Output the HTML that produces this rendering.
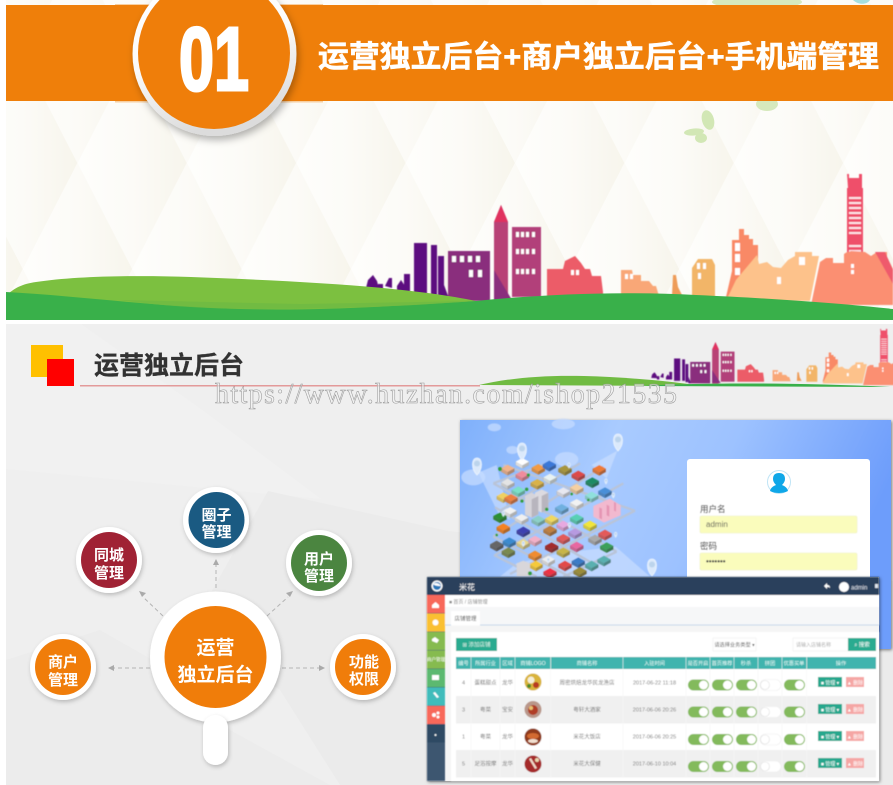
<!DOCTYPE html>
<html><head><meta charset="utf-8">
<style>
html,body{margin:0;padding:0;background:#fff;width:893px;height:785px;overflow:hidden}
svg{display:block}
text{font-family:"Liberation Sans","Noto Sans CJK SC",sans-serif}
</style></head><body>
<svg width="893" height="785" viewBox="0 0 893 785" xmlns="http://www.w3.org/2000/svg">
<defs>
<linearGradient id="bl" x1="0" y1="0" x2="1" y2="0.25"><stop offset="0" stop-color="#7fb0fb"/><stop offset=".35" stop-color="#a9cbff"/><stop offset=".62" stop-color="#9dc2ff"/><stop offset="1" stop-color="#6d9dfb"/></linearGradient>
<linearGradient id="dg" x1="0" y1="0" x2="1" y2="0"><stop offset="0" stop-color="#fefefc"/><stop offset=".5" stop-color="#fcfbf7"/><stop offset="1" stop-color="#f7f5ec"/></linearGradient>
<linearGradient id="ring" x1="0" y1="0" x2=".3" y2="1"><stop offset="0" stop-color="#fff"/><stop offset=".55" stop-color="#fbfbfb"/><stop offset="1" stop-color="#dcdcdc"/></linearGradient>
<filter id="b3" x="-5%" y="-5%" width="110%" height="110%"><feGaussianBlur stdDeviation=".45"/></filter>
<filter id="b6" x="-5%" y="-5%" width="110%" height="110%"><feGaussianBlur stdDeviation=".55"/></filter>
<filter id="b2" x="-5%" y="-5%" width="110%" height="110%"><feGaussianBlur stdDeviation=".3"/></filter>
<filter id="sh" x="-20%" y="-20%" width="140%" height="140%"><feDropShadow dx="1" dy="2" stdDeviation="2" flood-color="#000" flood-opacity=".22"/></filter>
<filter id="shb" x="-20%" y="-20%" width="140%" height="140%"><feDropShadow dx="2" dy="4" stdDeviation="4" flood-color="#000" flood-opacity=".3"/></filter>
<filter id="sh2" x="-5%" y="-5%" width="110%" height="110%"><feDropShadow dx="1" dy="1" stdDeviation="1.5" flood-color="#000" flood-opacity=".5"/></filter>
<pattern id="dia" width="109.4" height="212" patternUnits="userSpaceOnUse" x="-32" y="57">
<rect width="109.4" height="212" fill="#fbfaf5"/>
<path id="dd" d="M54.7 0L109.400 106L54.7 212L0 106Z" fill="url(#dg)"/>
<path d="M0 -106L54.7 0L0 106L-54.7 0Z" fill="url(#dg)"/>
<path d="M109.400 -106L164.100 0L109.400 106L54.7 0Z" fill="url(#dg)"/>
<path d="M0 106L54.7 212L0 318L-54.7 212Z" fill="url(#dg)"/>
<path d="M109.400 106L164.100 212L109.400 318L54.7 212Z" fill="url(#dg)"/>
</pattern>
<g id="sky">
<path d="M366 288l2-8 5-5 4 6 2 8zM378 284h5v8h-5zM385 286l4-8h3v10zM397 286l4-6 4 6v6h-8zM404 274h6v18h-6z" fill="#5d1080"/>
<rect x="414" y="243" width="13" height="52" fill="#5d1080"/><rect x="431" y="245" width="6" height="50" fill="#5d1080"/><rect x="438" y="256" width="6" height="42" fill="#5d1080"/>
<path d="M444 285l6 16h-6z" fill="#5d1080"/>
<rect x="448" y="251" width="42" height="50" fill="#8a2d7d"/>
<g fill="#fff"><rect x="452" y="256" width="4" height="6"/><rect x="460" y="256" width="4" height="6"/><rect x="468" y="256" width="4" height="6"/><rect x="476" y="256" width="4" height="6"/><rect x="469" y="270" width="4" height="7"/><rect x="478" y="270" width="4" height="7"/></g>
<path d="M494 222l7-17 7 17v80h-14z" fill="#b84276"/><path d="M494 222l7-17 7 17z" fill="#e0305f"/>
<path d="M494 270l18 30h-18z" fill="#8a2d7d"/>
<rect x="512" y="227" width="29" height="70" fill="#b2407a"/>
<g fill="#fff"><rect x="516" y="232" width="3" height="5"/><rect x="521" y="232" width="3" height="5"/><rect x="526" y="232" width="3" height="5"/><rect x="532" y="232" width="3" height="5"/><rect x="516" y="249" width="3" height="5"/><rect x="521" y="249" width="3" height="5"/><rect x="526" y="249" width="3" height="5"/><rect x="532" y="249" width="3" height="5"/><rect x="516" y="269" width="3" height="5"/><rect x="521" y="269" width="3" height="5"/><rect x="526" y="269" width="3" height="5"/><rect x="532" y="269" width="3" height="5"/></g>
<path d="M547 269h16l2-8 10-5 6 7 4 6h5l2 7h9l2 16v5h-56z" fill="#ec5b67"/>
<g fill="#fff"><rect x="571" y="270" width="3" height="5"/><rect x="576" y="270" width="3" height="5"/></g>
<path d="M621 270h11l1 5h8v6h8l4 5h3l3 10h-38z" fill="#f9a777"/>
<g fill="#fff"><rect x="625" y="274" width="3" height="5"/><rect x="630" y="274" width="3" height="5"/></g>
<path d="M673 275h3l2 12 4 8h-10z" fill="#ee9c59"/>
<path d="M692 268l6-9h14l3 6v32h-23z" fill="#f2b568"/>
<g fill="#fff"><rect x="697" y="263" width="3" height="6"/><rect x="703" y="263" width="3" height="6"/><rect x="698" y="273" width="3" height="6"/></g>
<path d="M732 240h7v-11h5v6h5v4h4v6h5v18l-14 22l-6 12h-12l6-26z" fill="#f98966"/>
<g fill="#fff"><rect x="735" y="243" width="5" height="8"/><rect x="735" y="254" width="5" height="8"/><rect x="735" y="268" width="5" height="7"/></g>
<path d="M736 280l21-25 2 9 8-2 6 5 8 1 7-8 7-4v-4h17v4h7l-9 45h-84z" fill="#fdc28b"/>
<g fill="#fff"><rect x="799" y="257" width="6" height="8"/><rect x="777" y="277" width="4" height="7"/></g>
<path d="M847 174h2v4h10v-4h3v14h1v68h-16v-68h1z" fill="#ef4f6b"/>
<g fill="#fff" opacity=".85"><rect x="849" y="197" width="12" height="2"/><rect x="849" y="202" width="12" height="2"/><rect x="849" y="207" width="12" height="2"/><rect x="849" y="212" width="12" height="2"/><rect x="849" y="217" width="12" height="2"/><rect x="849" y="222" width="12" height="2"/><rect x="849" y="227" width="12" height="2"/><rect x="849" y="232" width="12" height="2"/><rect x="849" y="245" width="12" height="2"/><rect x="849" y="250" width="12" height="2"/></g>
<path d="M811 305l9-43 6-4h7v5h11v-9l3-2h2l2-1 14 1 6 4 6-4h10v5l6 12v36z" fill="#fb8f72"/>
<path d="M875 252h10l8 18v14z" fill="#ef5a6c"/>
<g fill="#fff"><rect x="851" y="264" width="3" height="4"/><rect x="851" y="270" width="3" height="4"/></g>
</g>
<g id="tog"><rect width="21" height="11" rx="5.500" fill="#83ba5c"/><circle cx="15.500" cy="5.500" r="4.500" fill="#fff"/></g>
<g id="tof"><rect width="21" height="11" rx="5.500" fill="#fff" stroke="#eee" stroke-width=".6"/><circle cx="5" cy="5.500" r="4.500" fill="#fff" stroke="#ddd" stroke-width=".6"/></g>
<g id="pin"><path d="M0 10C-6 4-6-7 0-7S6 4 0 10Z" fill="#dbe9fb" stroke="#eef6ff" stroke-width=".8"/><circle cy="-1.500" r="3" fill="#bcd4ec"/></g>
<g id="i"><path d="M-20 0L0 11V21L-20 10Z" fill="#555"/><path d="M20 0L0 11V21L20 10Z" fill="#333"/><path d="M-20 0L0 11V21L-20 10Z" fill="currentColor" opacity=".8"/><path d="M20 0L0 11V21L20 10Z" fill="currentColor" opacity=".65"/><path d="M-20 0L0-11L20 0L0 11Z" fill="currentColor"/></g>
<g id="act"><rect x="0" y="0" width="24" height="10" fill="#25a78d"/><text x="12" y="7.400" font-size="5" fill="#fff" text-anchor="middle">■ 管理 ▾</text><rect x="28" y="0" width="18" height="10" fill="#f5a6a4"/><text x="37" y="7.400" font-size="5" fill="#fff" text-anchor="middle">▲ 删除</text></g>
</defs>

<rect width="893" height="785" fill="#fff"/>

<!-- TOP SECTION -->
<rect x="6" y="0" width="887" height="320" fill="url(#dia)"/>
<ellipse cx="757" cy="2" rx="45" ry="7" fill="#d6e9bd"/>
<path d="M853 0h17c-3 5-12 5-17 0z" fill="#a5dfe0"/>
<ellipse cx="767" cy="104" rx="11" ry="7" fill="#d6e9bd"/>
<g fill="#d2e7b5"><ellipse cx="708" cy="120" rx="6" ry="10" transform="rotate(-15 708 120)"/><ellipse cx="694" cy="132" rx="10" ry="3.500" transform="rotate(-5 694 132)"/><ellipse cx="701" cy="138" rx="6" ry="5"/></g>
<g filter="url(#b3)"><use href="#sky"/></g>
<path d="M6 296c8-8 16-12 30-14 40-6 100-7 155-5 110 4 220 10 285 24v19H6z" fill="#7cc040"/>
<path d="M6 292c60 3 130 12 190 15 80 5 160 2 280-6 70-7 145-10 220-6 90 4 150 9 197 14v11H6z" fill="#39b04a"/>
<path d="M120 300c40 6 90 9 140 9 80 0 150-3 216-8L300 304z" fill="#6dba43" opacity=".75"/>
<!-- band -->
<rect x="115" y="4" width="208" height="98.500" fill="#f8cfa0"/>
<rect x="6" y="5" width="887" height="96" fill="#ef7f0a"/>
<circle cx="214.500" cy="54" r="82" fill="url(#ring)" filter="url(#shb)"/>
<circle cx="214" cy="53" r="76" fill="#ef7e0a"/>
<text x="179" y="90" font-size="90" font-weight="700" fill="#fff" textLength="70" lengthAdjust="spacingAndGlyphs" stroke="#fff" stroke-width="3">01</text>
<g filter="url(#b2)"><text x="318" y="67" font-size="30" font-weight="700" fill="#fff" textLength="561" lengthAdjust="spacingAndGlyphs" stroke="#fff" stroke-width=".5">运营独立后台+商户独立后台+手机端管理</text></g>

<!-- SECOND SECTION -->
<rect x="6" y="324" width="887" height="461" fill="#efefef"/>
<path d="M6 324h75l120 85 120 90-315-30z" fill="#f1f1f1"/>
<path d="M268 491l180 40 445 50v204H340l-60-95-90-60z" fill="#ebebeb"/>
<path d="M6 660l94-30 70 40 60 60 100 55H6z" fill="#ececec"/>
<rect x="31" y="345" width="32" height="32" fill="#ffc000"/>
<rect x="47" y="359" width="27" height="27" fill="#ff0000"/>
<g filter="url(#b2)"><text x="94" y="374" font-size="25" font-weight="700" fill="#333" textLength="150" lengthAdjust="spacingAndGlyphs" stroke="#333" stroke-width=".3">运营独立后台</text></g>
<rect x="80" y="385" width="400" height="1.500" fill="#e39a9a"/>
<!-- mini skyline -->
<g filter="url(#b3)"><g transform="translate(477 254) scale(.476 .43)"><use href="#sky"/></g></g>
<path d="M479 385c30-7 65-10 105-9 40 1 85 5 119 10z" fill="#70bb42"/>
<path d="M640 386c50-3 150-4 250 1z" fill="#39b04a"/>
<rect x="479" y="387" width="414" height="36" fill="#efefef"/>

<!-- arrows -->
<g stroke="#b4b4b4" stroke-width="1" stroke-dasharray="4 3" fill="none">
<path d="M216 588V563"/><path d="M163 616L143 597"/><path d="M267 616L288 597"/><path d="M150 668H113"/><path d="M282 668H320"/>
</g>
<g fill="#aaa"><path d="M216 559l-3 6h6z"/><path d="M139 591l7 2-4 4z"/><path d="M293 591l-7 2 4 4z"/><path d="M108 668l6-3v6z"/><path d="M325 668l-6-3v6z"/></g>

<!-- circles -->
<g filter="url(#sh)"><circle cx="216" cy="520" r="33" fill="#fff"/><circle cx="109" cy="560" r="33" fill="#fff"/><circle cx="319" cy="563" r="33" fill="#fff"/><circle cx="63" cy="667" r="33" fill="#fff"/><circle cx="363" cy="667" r="33" fill="#fff"/><circle cx="215.500" cy="657" r="65.500" fill="#fff"/></g>
<circle cx="216.500" cy="520" r="28" fill="#1a5a82"/>
<circle cx="109" cy="560" r="28" fill="#a02234"/>
<circle cx="319" cy="563" r="28" fill="#4b8540"/>
<circle cx="63" cy="667" r="28" fill="#f07d0a"/>
<circle cx="363" cy="667" r="28" fill="#f07d0a"/>
<circle cx="215.500" cy="657" r="51" fill="#f07d0a"/>
<rect x="203" y="715" width="25" height="50" rx="12.500" fill="#fff" filter="url(#sh)"/>
<g filter="url(#b2)" font-size="15" font-weight="700" fill="#fff" text-anchor="middle">
<text x="216.500" y="520">圈子</text><text x="216.500" y="537">管理</text>
<text x="109" y="560">同城</text><text x="109" y="578">管理</text>
<text x="319" y="564">用户</text><text x="319" y="581">管理</text>
<text x="63" y="667">商户</text><text x="63" y="685">管理</text>
<text x="364" y="667">功能</text><text x="364" y="684">权限</text>
<text x="215.500" y="654" font-size="19">运营</text><text x="215.500" y="681" font-size="19">独立后台</text>
</g>

<!-- LOGIN PANEL -->
<g filter="url(#sh2)"><rect x="460" y="420" width="431" height="229" fill="url(#bl)"/></g>
<g filter="url(#b6)">
<g transform="translate(460 420) scale(.33333)">
<g fill="#cfe2ff" opacity=".6"><path d="M55 158L110 135 150 300 115 280z"/><path d="M472 92L395 135 440 175z"/><path d="M467 380L570 470H120L170 430 300 400z"/></g>
<g fill="#c4dbff" opacity=".75"><ellipse cx="103" cy="22" rx="20" ry="12"/><ellipse cx="310" cy="12" rx="35" ry="16"/><ellipse cx="157" cy="90" rx="18" ry="12"/><ellipse cx="40" cy="172" rx="36" ry="24"/><ellipse cx="320" cy="118" rx="35" ry="22"/></g>
<g stroke="#b9c4d8" stroke-width="7" fill="none">
<path d="M130 135L525 272M100 190L470 395M105 262L415 440M100 350L330 470M102 405L230 470"/>
<path d="M100 190L275 125M120 272L360 130M100 350L430 140M105 405L490 190M150 462L525 272M310 470L470 395"/>
</g>
<use href="#i" x="143" y="145" color="#f2b48c"/><use href="#i" x="187" y="125" color="#fff"/><use href="#i" x="235" y="143" color="#f29b45"/><use href="#i" x="268" y="133" color="#3b78d8"/><use href="#i" x="315" y="146" color="#a7953e"/><use href="#i" x="355" y="163" color="#dd4a48"/><use href="#i" x="418" y="146" color="#ee7a35"/><use href="#i" x="397" y="183" color="#1e8b63"/><use href="#i" x="143" y="187" color="#e4e4e4"/><use href="#i" x="187" y="163" color="#f08c9c"/><use href="#i" x="232" y="188" color="#d9b24a"/><use href="#i" x="270" y="172" color="#e8f2f2"/><use href="#i" x="350" y="203" color="#f5d0a2"/><use href="#i" x="310" y="213" color="#e8e8f0"/><use href="#i" x="175" y="210" color="#7de0c7"/><use href="#i" x="130" y="228" color="#f0d060"/><use href="#i" x="153" y="233" color="#ee8040"/><use href="#i" x="435" y="213" color="#4a8fd8"/><use href="#i" x="395" y="226" color="#8fe0dc"/><use href="#i" x="305" y="263" color="#6fb0e0"/><use href="#i" x="350" y="248" color="#f2f2f2"/><use href="#i" x="120" y="288" color="#2c9030"/><use href="#i" x="150" y="272" color="#f2f2f2"/><use href="#i" x="185" y="293" color="#f0f0f0"/><use href="#i" x="130" y="321" color="#f58220"/><use href="#i" x="190" y="331" color="#3c3fb0"/><use href="#i" x="235" y="298" color="#8cd0c8"/><use href="#i" x="275" y="296" color="#f0d860"/><use href="#i" x="310" y="313" color="#e8a9e0"/><use href="#i" x="350" y="293" color="#59d0b5"/><use href="#i" x="390" y="313" color="#f1e53a"/><use href="#i" x="270" y="328" color="#c08040"/><use href="#i" x="345" y="336" color="#b79ae0"/><use href="#i" x="310" y="353" color="#e35a5a"/><use href="#i" x="148" y="363" color="#3a8bd0"/><use href="#i" x="110" y="373" color="#666"/><use href="#i" x="190" y="368" color="#e8d890"/><use href="#i" x="275" y="378" color="#a32b2b"/><use href="#i" x="225" y="358" color="#f2b0c8"/><use href="#i" x="350" y="376" color="#e868a0"/><use href="#i" x="405" y="355" color="#aaa"/><use href="#i" x="435" y="340" color="#e35a5a"/><use href="#i" x="440" y="378" color="#3aa05a"/><use href="#i" x="145" y="393" color="#7a8a50"/><use href="#i" x="225" y="403" color="#f08c30"/><use href="#i" x="310" y="393" color="#c7b54a"/><use href="#i" x="265" y="418" color="#eee"/><use href="#i" x="355" y="423" color="#3a7bc8"/><use href="#i" x="395" y="433" color="#5ab0b0"/><use href="#i" x="432" y="418" color="#5ab0b0"/><use href="#i" x="228" y="433" color="#f5c93a"/><use href="#i" x="315" y="433" color="#e24a4a"/><use href="#i" x="270" y="455" color="#e34"/><use href="#i" x="360" y="452" color="#9a8c3a"/>
<g fill="#d6d4da"><path d="M195 228l20-10 20 10v55l-20 10-20-10z"/><path d="M225 218l20-10 20 10v50l-20 10-20-10z" fill="#dcdae0"/><path d="M170 430l20-8 20 8v40h-40z" fill="#d8d6da"/></g>
<g fill="#b8b5be"><path d="M215 238v55l20-10v-55z"/><path d="M245 228v50l20-10v-50z"/></g>
<path d="M400 258l50-22 32 20v30l-50 22-32-18z" fill="#f2b9cf"/><path d="M418 262v32l8 4v-32zM440 254v32l8 4v-32zM462 246v26l6 3v-26z" fill="#e595b3"/>
<g fill="#2e9e3a"><circle cx="120" cy="147" r="6"/><circle cx="205" cy="165" r="5"/><circle cx="200" cy="208" r="5"/><circle cx="186" cy="243" r="5"/><circle cx="260" cy="268" r="5"/><circle cx="385" cy="240" r="4"/><circle cx="210" cy="460" r="6"/><circle cx="335" cy="222" r="4"/><circle cx="110" cy="345" r="4"/></g>
<use href="#pin" x="50" y="128" style="transform-box:fill-box"/><use href="#pin" x="185" y="90"/><use href="#pin" x="473" y="58"/><use href="#pin" x="327" y="135"/><use href="#pin" x="438" y="183"/><use href="#pin" x="460" y="225"/><use href="#pin" x="467" y="343"/><use href="#pin" x="130" y="280"/><use href="#pin" x="265" y="420"/><use href="#pin" x="190" y="370"/><use href="#pin" x="328" y="315"/>
</g>
<use href="#pin" x="652" y="566"/><use href="#pin" x="477" y="465"/><use href="#pin" x="522" y="450"/><use href="#pin" x="618" y="441"/>
</g>
<rect x="687" y="459" width="183" height="130" rx="3" fill="#fff"/>
<circle cx="779" cy="482" r="11.500" fill="#fff" stroke="#bfe4f6" stroke-width="1"/>
<path d="M770 491c1-4 4-5 6-6-2-2-3-4-3-6 0-4 2-6 6-6s6 2 6 6c0 2-1 4-3 6 2 1 5 2 6 6-3 1.500-6 2-9 2s-6-.5-9-2z" fill="#0fa7e8"/>
<g filter="url(#b3)"><text x="700" y="512" font-size="8.500" fill="#555">用户名</text>
<rect x="700" y="516" width="157" height="17" rx="1.500" fill="#fafcbc" stroke="#eef0c8" stroke-width=".6"/><text x="706" y="527" font-size="8" fill="#555">admin</text>
<text x="700" y="549" font-size="8.500" fill="#555">密码</text>
<rect x="700" y="553" width="157" height="17" rx="1.500" fill="#fafcbc" stroke="#eef0c8" stroke-width=".6"/><text x="706" y="564" font-size="8" font-weight="700" fill="#444">•••••••</text></g>

<!-- ADMIN PANEL -->
<g filter="url(#sh2)"><rect x="427" y="577" width="452" height="204" fill="#f5f5f5"/></g>
<g filter="url(#b6)">
<rect x="427" y="577" width="452" height="18" fill="#2a3f5c"/>
<circle cx="437" cy="586" r="5.500" fill="#fff"/><circle cx="437" cy="586" r="4" fill="#2a77b8"/><path d="M433 584c3-2 6-1 8 2-3 0-6 0-8-2z" fill="#fff"/>
<text x="459" y="590" font-size="8" fill="#fff">米花</text>
<path d="M824 586l3-3v2c2 0 3 1 3 3-1-1-2-1-3-1v2z" fill="#fff"/>
<circle cx="844" cy="587" r="5" fill="#fff"/><text x="851" y="589.500" font-size="6" fill="#dfe5ee">admin</text>
<rect x="875" y="584" width="3" height="4" fill="#dfe5ee"/>
<rect x="427" y="595" width="18" height="186" fill="#3d566f"/>
<rect x="427" y="595" width="18" height="18" fill="#f8685a"/>
<rect x="427" y="613.500" width="18" height="18" fill="#fac030"/>
<rect x="427" y="632" width="18" height="18" fill="#86bb50"/>
<rect x="427" y="650.500" width="18" height="18" fill="#86bb50"/>
<rect x="427" y="669" width="18" height="18" fill="#5cb96f"/>
<rect x="427" y="687.500" width="18" height="18" fill="#41bcbb"/>
<rect x="427" y="706" width="18" height="18" fill="#f8685a"/>
<rect x="427" y="724.500" width="18" height="18" fill="#2d4963"/>
<g fill="#fff"><path d="M432 605l3.500-3 3.500 3v3h-7z"/><circle cx="435.500" cy="622.500" r="3"/><path d="M432 639l3-2 4 3-2 3-5-2z"/><rect x="432" y="675" width="7" height="5"/><path d="M433 693l2-1 4 5-2 1z"/><circle cx="434" cy="715" r="2"/><circle cx="438" cy="713" r="1.500"/><circle cx="438" cy="717" r="1.500"/><circle cx="435.500" cy="735" r="1"/></g>
<text x="436" y="661" font-size="4.500" fill="#fff" text-anchor="middle">商户管理</text>
<rect x="445" y="595" width="434" height="12" fill="#fff"/>
<text x="449" y="603.500" font-size="5" fill="#888">■ 首页  /  店铺管理</text>
<rect x="445" y="607" width="434" height="18" fill="#f6f7f8"/>
<rect x="445" y="624.500" width="434" height="1" fill="#c8d8ea"/>
<rect x="451" y="611" width="29" height="14.500" fill="#fff"/>
<text x="465.500" y="620.500" font-size="5.500" fill="#555" text-anchor="middle">店铺管理</text>
<rect x="451" y="632" width="428" height="149" fill="#fff"/>
<rect x="456" y="638" width="41" height="13" fill="#2bab90"/>
<text x="476.500" y="646.500" font-size="5.500" fill="#d8f3ea" text-anchor="middle">⊞  添加店铺</text>
<rect x="713" y="638" width="43" height="13" fill="#fff" stroke="#eee" stroke-width=".6"/>
<text x="734.500" y="646.500" font-size="5.200" fill="#555" text-anchor="middle">请选择业务类型 ▾</text>
<rect x="793" y="638" width="55" height="13" fill="#fff" stroke="#eee" stroke-width=".6"/>
<text x="796" y="646.500" font-size="5" fill="#aaa">请输入店铺名称</text>
<rect x="848" y="638" width="28" height="13" fill="#2bab90"/>
<text x="862" y="646.500" font-size="5.500" fill="#fff" text-anchor="middle">⌕ 搜索</text>
<rect x="456" y="657" width="420" height="12" fill="#3fb4ae"/>
<rect x="456" y="696" width="420" height="27.500" fill="#f0f0f0"/>
<rect x="456" y="750" width="420" height="27.500" fill="#f0f0f0"/>
<g stroke="#f7f7f7" stroke-width=".6"><path d="M471 657v121M500 657v121M515 657v121M550.700 657v121M623 657v121M686 657v121M710 657v121M734 657v121M758 657v121M782 657v121M806.700 657v121"/></g>
<g font-size="5.200" fill="#e8fbf8" text-anchor="middle">
<text x="463.500" y="665">编号</text><text x="485.500" y="665">所属行业</text><text x="507.500" y="665">区域</text><text x="533" y="665">商铺LOGO</text><text x="587" y="665">商铺名称</text><text x="654.500" y="665">入驻时间</text><text x="698" y="665">是否开启</text><text x="722" y="665">首页推荐</text><text x="746" y="665">秒杀</text><text x="770" y="665">拼团</text><text x="794" y="665">优惠买单</text><text x="841" y="665">操作</text>
</g>
<g font-size="5.500" fill="#777" text-anchor="middle">
<text x="463.500" y="684.500">4</text><text x="485.500" y="684.500">蛋糕甜点</text><text x="507.500" y="684.500">龙华</text><text x="587" y="684.500">周密烘焙龙华民龙渔店</text><text x="654.500" y="684.500">2017-06-22 11:18</text>
<text x="463.500" y="711.500">3</text><text x="485.500" y="711.500">粤菜</text><text x="507.500" y="711.500">宝安</text><text x="587" y="711.500">粤轩大酒家</text><text x="654.500" y="711.500">2017-06-06 20:26</text>
<text x="463.500" y="738.500">1</text><text x="485.500" y="738.500">粤菜</text><text x="507.500" y="738.500">龙华</text><text x="587" y="738.500">米花大饭店</text><text x="654.500" y="738.500">2017-06-06 20:25</text>
<text x="463.500" y="765.500">5</text><text x="485.500" y="765.500">足浴按摩</text><text x="507.500" y="765.500">龙华</text><text x="587" y="765.500">米花大保健</text><text x="654.500" y="765.500">2017-06-10 10:04</text>
</g>
<circle cx="533" cy="682" r="8.500" fill="#d9b43a"/><circle cx="531" cy="680" r="3.500" fill="#f5efd8"/><circle cx="536" cy="685" r="3" fill="#b83a20"/><circle cx="529" cy="686" r="2" fill="#4e8a2e"/>
<circle cx="533" cy="709.500" r="8.500" fill="#b9978a"/><circle cx="533" cy="710" r="5" fill="#b03c28"/><circle cx="531" cy="708" r="2" fill="#e8c070"/>
<circle cx="533" cy="737" r="8.500" fill="#8f3a1a"/><ellipse cx="533" cy="736" rx="6" ry="3" fill="#d26a30"/><ellipse cx="533" cy="741" rx="5" ry="2" fill="#f2e0d0"/>
<circle cx="533" cy="764" r="8.500" fill="#a52c2c"/><path d="M529 759l6 10 2-1-6-10z" fill="#f0d8c8"/><circle cx="537" cy="760" r="2" fill="#e8d8b0"/>
<g>
<use href="#tog" x="688" y="679.500"/><use href="#tog" x="712" y="679.500"/><use href="#tog" x="736" y="679.500"/><use href="#tof" x="760" y="679.500"/><use href="#tog" x="784" y="679.500"/>
<use href="#tog" x="688" y="706.500"/><use href="#tog" x="712" y="706.500"/><use href="#tog" x="736" y="706.500"/><use href="#tof" x="760" y="706.500"/><use href="#tog" x="784" y="706.500"/>
<use href="#tog" x="688" y="734"/><use href="#tog" x="712" y="734"/><use href="#tog" x="736" y="734"/><use href="#tof" x="760" y="734"/><use href="#tog" x="784" y="734"/>
<use href="#tog" x="688" y="761"/><use href="#tog" x="712" y="761"/><use href="#tog" x="736" y="761"/><use href="#tof" x="760" y="761"/><use href="#tog" x="784" y="761"/>
<use href="#act" x="818" y="677"/><use href="#act" x="818" y="704"/><use href="#act" x="818" y="731"/><use href="#act" x="818" y="758"/>
</g>
</g>

<!-- watermark -->
<text x="215" y="403" font-size="28" fill="#f4f4f4" fill-opacity=".6" stroke="#999" stroke-width=".55" textLength="462" lengthAdjust="spacing" style="font-family:'Liberation Serif',serif">https://www.huzhan.com/ishop21535</text>
</svg>
</body></html>
